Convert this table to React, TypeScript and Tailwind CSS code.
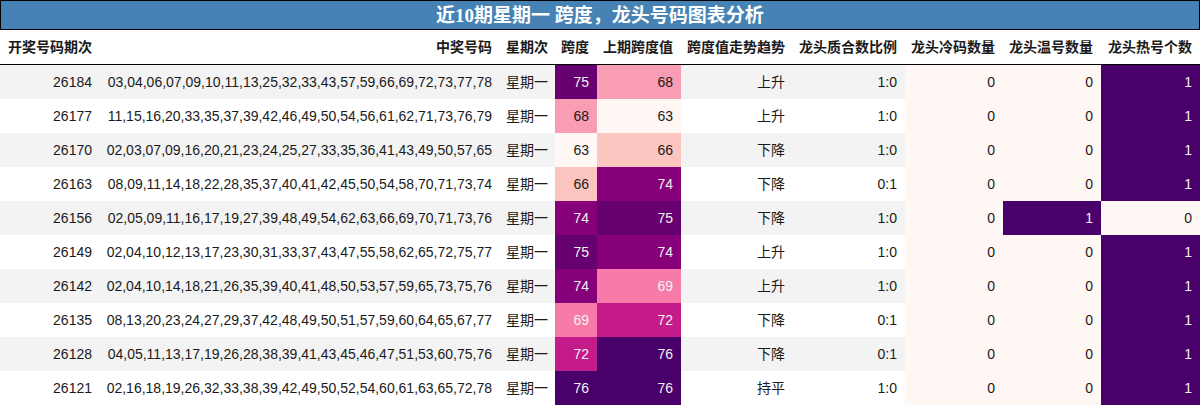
import React from "react";

type Row = {
  id: string;
  nums: string;
  span: number;
  prev: number;
  trend: string;
  ratio: string;
  cold: number;
  warm: number;
  hot: number;
};

const rows: Row[] = [
  { id: "26184", nums: "03,04,06,07,09,10,11,13,25,32,33,43,57,59,66,69,72,73,77,78", span: 75, prev: 68, trend: "上升", ratio: "1:0", cold: 0, warm: 0, hot: 1 },
  { id: "26177", nums: "11,15,16,20,33,35,37,39,42,46,49,50,54,56,61,62,71,73,76,79", span: 68, prev: 63, trend: "上升", ratio: "1:0", cold: 0, warm: 0, hot: 1 },
  { id: "26170", nums: "02,03,07,09,16,20,21,23,24,25,27,33,35,36,41,43,49,50,57,65", span: 63, prev: 66, trend: "下降", ratio: "1:0", cold: 0, warm: 0, hot: 1 },
  { id: "26163", nums: "08,09,11,14,18,22,28,35,37,40,41,42,45,50,54,58,70,71,73,74", span: 66, prev: 74, trend: "下降", ratio: "0:1", cold: 0, warm: 0, hot: 1 },
  { id: "26156", nums: "02,05,09,11,16,17,19,27,39,48,49,54,62,63,66,69,70,71,73,76", span: 74, prev: 75, trend: "下降", ratio: "1:0", cold: 0, warm: 1, hot: 0 },
  { id: "26149", nums: "02,04,10,12,13,17,23,30,31,33,37,43,47,55,58,62,65,72,75,77", span: 75, prev: 74, trend: "上升", ratio: "1:0", cold: 0, warm: 0, hot: 1 },
  { id: "26142", nums: "02,04,10,14,18,21,26,35,39,40,41,48,50,53,57,59,65,73,75,76", span: 74, prev: 69, trend: "上升", ratio: "1:0", cold: 0, warm: 0, hot: 1 },
  { id: "26135", nums: "08,13,20,23,24,27,29,37,42,48,49,50,51,57,59,60,64,65,67,77", span: 69, prev: 72, trend: "下降", ratio: "0:1", cold: 0, warm: 0, hot: 1 },
  { id: "26128", nums: "04,05,11,13,17,19,26,28,38,39,41,43,45,46,47,51,53,60,75,76", span: 72, prev: 76, trend: "下降", ratio: "0:1", cold: 0, warm: 0, hot: 1 },
  { id: "26121", nums: "02,16,18,19,26,32,33,38,39,42,49,50,52,54,60,61,63,65,72,78", span: 76, prev: 76, trend: "持平", ratio: "1:0", cold: 0, warm: 0, hot: 1 },
];

const spanColor: Record<number, string> = {
  63: "bg-[#fff7f3] text-[#1a1a1a]",
  66: "bg-[#fcc5c0] text-[#1a1a1a]",
  68: "bg-[#f99db4] text-[#1a1a1a]",
  69: "bg-[#f77ba8] text-[#f1f1f1]",
  72: "bg-[#c51b8a] text-[#f1f1f1]",
  74: "bg-[#860179] text-[#f1f1f1]",
  75: "bg-[#670070] text-[#f1f1f1]",
  76: "bg-[#49006a] text-[#f1f1f1]",
};

const binColor = (v: number) =>
  v === 1 ? "bg-[#49006a] text-[#f1f1f1]" : "bg-[#fff7f3] text-[#1a1a1a]";

const headers: { label: string; w: string; align: string }[] = [
  { label: "开奖号码期次", w: "w-[100px]", align: "justify-start pl-2" },
  { label: "中奖号码", w: "w-[400px]", align: "justify-end pr-2" },
  { label: "星期次", w: "w-[55px]", align: "justify-end pr-[7px]" },
  { label: "跨度", w: "w-[42px]", align: "justify-end pr-2" },
  { label: "上期跨度值", w: "w-[84px]", align: "justify-end pr-2" },
  { label: "跨度值走势趋势", w: "w-[112px]", align: "justify-end pr-2" },
  { label: "龙头质合数比例", w: "w-[112px]", align: "justify-end pr-2" },
  { label: "龙头冷码数量", w: "w-[98px]", align: "justify-end pr-2" },
  { label: "龙头温号数量", w: "w-[98px]", align: "justify-end pr-2" },
  { label: "龙头热号个数", w: "w-[99px]", align: "justify-end pr-2" },
];

function Cell({ w, cls, children, pr = "pr-2" }: { w: string; cls?: string; children: React.ReactNode; pr?: string }) {
  return (
    <div className={`${w} shrink-0 h-full flex items-center justify-end ${pr} whitespace-nowrap ${cls ?? ""}`}>
      {children}
    </div>
  );
}

export default function App() {
  return (
    <div
      className="w-[1200px] h-[406px] bg-white overflow-hidden text-[14px] text-[#1a1a1a]"
      style={{ fontFamily: '"Liberation Sans", "Noto Sans CJK SC", sans-serif' }}
    >
      <div
        className="h-[30px] border border-black bg-[#4682b4] text-white font-bold text-[19px] flex items-center justify-center leading-none"
        style={{ fontFamily: '"Liberation Serif", "Noto Sans CJK SC", serif' }}
      >
        近10期星期一 跨度，龙头号码图表分析
      </div>
      <div className="h-[35px] border-b border-black flex font-bold">
        {headers.map((h) => (
          <div key={h.label} className={`${h.w} shrink-0 h-full flex items-center ${h.align} whitespace-nowrap`}>
            {h.label}
          </div>
        ))}
      </div>
      {rows.map((r, i) => (
        <div key={r.id} className={`h-[34px] flex ${i % 2 === 0 ? "bg-[#f3f3f3]" : "bg-white"}`}>
          <Cell w="w-[100px]">{r.id}</Cell>
          <Cell w="w-[400px]">{r.nums}</Cell>
          <Cell w="w-[55px]" pr="pr-[7px]">星期一</Cell>
          <Cell w="w-[42px]" cls={spanColor[r.span]}>{r.span}</Cell>
          <Cell w="w-[84px]" cls={spanColor[r.prev]}>{r.prev}</Cell>
          <Cell w="w-[112px]">{r.trend}</Cell>
          <Cell w="w-[112px]">{r.ratio}</Cell>
          <Cell w="w-[98px]" cls={binColor(r.cold)}>{r.cold}</Cell>
          <Cell w="w-[98px]" cls={binColor(r.warm)}>{r.warm}</Cell>
          <Cell w="w-[99px]" cls={binColor(r.hot)}>{r.hot}</Cell>
        </div>
      ))}
    </div>
  );
}
